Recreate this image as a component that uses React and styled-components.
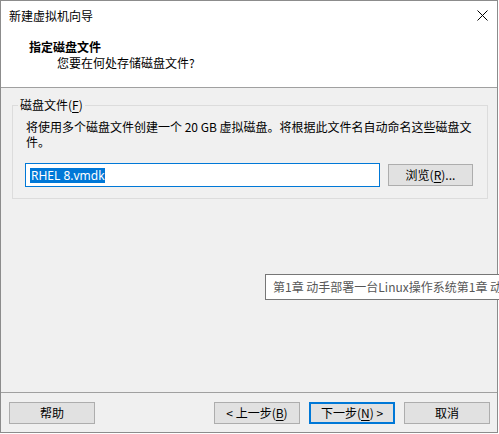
import styled, { createGlobalStyle } from 'styled-components';

//____________GLOBAL____________
const Global = createGlobalStyle`
    html, body {
        margin: 0;
        padding: 0;
        background: #ffffff;
    }
    body {
        font-family: "Noto Sans CJK SC", "Noto Sans", sans-serif;
        font-size: 12px;
        color: #000000;
    }
`;
//____________GLOBAL____________

//____________WINDOW____________
const Window = styled.div`
    position: relative;
    width: 498px;
    height: 433px;
    box-sizing: border-box;
    border: 1px solid #8c8c8c;
    background: #f0f0f0;
    display: flex;
    flex-direction: column;
`;

const TitleBar = styled.div`
    height: 29px;
    background: #ffffff;
    display: flex;
    align-items: center;
    justify-content: space-between;
    padding: 0 9px 0 8px;
    line-height: 16px;
`;

const CloseIcon = () => (
    <svg width="11" height="11" viewBox="0 0 11 11">
        <path d="M0.5 0.5 L10.5 10.5 M10.5 0.5 L0.5 10.5" stroke="#000" strokeWidth="1" fill="none" />
    </svg>
);

const Header = styled.div`
    height: 48px;
    background: #ffffff;
    padding: 9px 0 0 28px;
    border-bottom: 1px solid #a0a0a0;
`;

const HeaderTitle = styled.div`
    font-weight: bold;
    line-height: 16px;
`;

const HeaderSub = styled.div`
    margin-left: 28px;
    line-height: 16px;
`;
//____________WINDOW____________

//____________BODY____________
const Body = styled.div`
    flex: 1;
    padding: 9px 9px 0 11px;
    border-bottom: 1px solid #a0a0a0;
`;

const Group = styled.fieldset`
    margin: 0;
    padding: 0 0 11px 5px;
    border: 1px solid #dcdcdc;
    min-width: 0;
`;

const Legend = styled.legend`
    padding: 0 2px;
    line-height: 16px;
`;

const Mn = styled.span`
    text-decoration: underline;
    text-underline-offset: 2px;
`;

const Description = styled.div`
    margin: 6px 0 0 8px;
    line-height: 15px;
    white-space: nowrap;
`;

const FileRow = styled.div`
    display: flex;
    align-items: center;
    gap: 8px;
    margin: 14px 0 0 7px;
`;

const FileInput = styled.div`
    width: 355px;
    height: 24px;
    box-sizing: border-box;
    border: 1px solid #0078d7;
    background: #ffffff;
    display: flex;
    align-items: center;
    padding-left: 4px;
    font-family: "Noto Sans", "Noto Sans CJK SC", sans-serif;
`;

const Selected = styled.span`
    background: #0078d7;
    color: #ffffff;
    line-height: 15px;
    padding: 0 0 0 1px;
`;

const Button = styled.div`
    width: ${p => p.$w || 86}px;
    height: 22px;
    box-sizing: border-box;
    border: ${p => (p.$focus ? '2px solid #0078d7' : '1px solid #adadad')};
    background: #e1e1e1;
    display: flex;
    align-items: center;
    justify-content: center;
    line-height: 16px;
    white-space: nowrap;
`;
//____________BODY____________

//____________FOOTER____________
const Footer = styled.div`
    height: 39px;
    box-sizing: border-box;
    padding: 9px 7px 0 8px;
    display: flex;
    justify-content: space-between;
    align-items: flex-start;
`;

const ButtonGroup = styled.div`
    display: flex;
    gap: 9px;
`;
//____________FOOTER____________

//____________TOOLTIP____________
const Clip = styled.div`
    position: absolute;
    left: 0;
    top: 0;
    width: 499px;
    height: 434px;
    overflow: hidden;
    pointer-events: none;
`;

const Tooltip = styled.div`
    position: absolute;
    left: 265px;
    top: 274px;
    width: 240px;
    height: 26px;
    box-sizing: border-box;
    border: 1px solid #767676;
    background: #ffffff;
    color: #575757;
    padding-left: 7px;
    display: flex;
    align-items: center;
    white-space: nowrap;
    overflow: hidden;
    line-height: 16px;
`;
//____________TOOLTIP____________

export default function App() {
    return (
        <>
            <Global />
            <Window>
                <TitleBar>
                    <span>新建虚拟机向导</span>
                    <CloseIcon />
                </TitleBar>
                <Header>
                    <HeaderTitle>指定磁盘文件</HeaderTitle>
                    <HeaderSub>您要在何处存储磁盘文件?</HeaderSub>
                </Header>
                <Body>
                    <Group>
                        <Legend>磁盘文件(<Mn>F</Mn>)</Legend>
                        <Description>
                            将使用多个磁盘文件创建一个 20 GB 虚拟磁盘。将根据此文件名自动命名这些磁盘文
                            <br />
                            件。
                        </Description>
                        <FileRow>
                            <FileInput>
                                <Selected>RHEL 8.vmdk</Selected>
                            </FileInput>
                            <Button $w={85}>浏览(<Mn>R</Mn>)...</Button>
                        </FileRow>
                    </Group>
                </Body>
                <Footer>
                    <Button>帮助</Button>
                    <ButtonGroup>
                        <Button>&lt; 上一步(<Mn>B</Mn>)</Button>
                        <Button $focus>下一步(<Mn>N</Mn>) &gt;</Button>
                        <Button>取消</Button>
                    </ButtonGroup>
                </Footer>
            </Window>
            <Clip>
                <Tooltip>第1章 动手部署一台Linux操作系统第1章 动手部署</Tooltip>
            </Clip>
        </>
    );
}
